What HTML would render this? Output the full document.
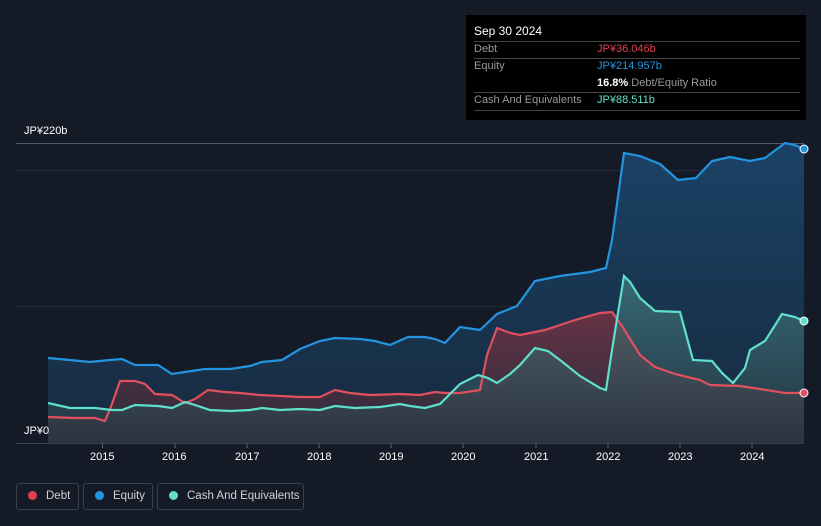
<!DOCTYPE html>
<html><head><meta charset="utf-8"><style>
html,body{margin:0;width:821px;height:526px;overflow:hidden}
body{background:#151b26;font-family:"Liberation Sans",sans-serif;position:relative}
.tt{position:absolute;left:466px;top:15px;width:340px;height:105px;background:#000;color:#fff;font-size:11px}
.tt .r{position:absolute;left:8px;width:326px;border-top:1px solid #444}
.lab{color:#999;position:absolute;left:8px}
.val{position:absolute;left:131px}
.leg{position:absolute;top:483px;height:27px;border:1px solid #3a404b;border-radius:3px;color:#cfd2d6;font-size:11.5px;line-height:25px;box-sizing:border-box;white-space:nowrap}
.leg i{display:inline-block;width:9px;height:9px;border-radius:50%;margin:0 9px 0 11px;vertical-align:-1px}
.yr{position:absolute;top:451px;color:#fff;font-size:11px}
</style></head><body>
<svg width="821" height="526" style="position:absolute;left:0;top:0">
<defs>
<linearGradient id="ge" x1="0" y1="0" x2="0" y2="1"><stop offset="0" stop-color="#1b4a72" stop-opacity=".85"/><stop offset="1" stop-color="#18314a" stop-opacity=".7"/></linearGradient>
<linearGradient id="gd" x1="0" y1="0" x2="0" y2="1"><stop offset="0" stop-color="#7a3242" stop-opacity=".8"/><stop offset="1" stop-color="#3a2d38" stop-opacity=".6"/></linearGradient>
<linearGradient id="gc" x1="0" y1="0" x2="0" y2="1"><stop offset="0" stop-color="#4a8a88" stop-opacity=".6"/><stop offset="1" stop-color="#2a3a45" stop-opacity=".6"/></linearGradient>
</defs>
<line x1="16" y1="143.5" x2="804" y2="143.5" stroke="#555b66"/>
<line x1="16" y1="170.5" x2="804" y2="170.5" stroke="#262c36"/>
<line x1="16" y1="306.5" x2="804" y2="306.5" stroke="#262c36"/>
<path fill="url(#ge)" d="M48,358 L70,360 L90,362 L110,360 L122,359 L135,365 L158,365 L172,374 L185,372 L205,369 L230,369 L250,366 L262,362 L282,360 L300,349 L320,341 L335,338 L360,339 L375,341 L390,345 L408,337 L425,337 L435,339 L445,343 L460,327 L480,330 L497,314 L517,306 L535,281 L560,276 L590,272 L606,268 L612,240 L624,153 L640,156 L660,164 L678,180 L696,178 L712,161 L730,157 L750,161 L765,158 L785,143 L795,145 L804,149 L804,443 L48,443Z"/>
<path fill="url(#gd)" d="M48,417 L75,418 L95,418 L105,421 L112,404 L120,381 L135,381 L145,384 L155,394 L172,395 L185,403 L195,399 L208,390 L225,392 L240,393 L260,395 L280,396 L300,397 L320,397 L335,390 L350,393 L370,395 L400,394 L420,395 L435,392 L445,393 L460,393 L480,390 L487,355 L497,328 L510,333 L520,335 L545,330 L575,320 L600,313 L612,312 L622,326 L640,355 L655,367 L675,374 L700,380 L710,385 L740,386 L760,389 L785,393 L804,393 L804,443 L48,443Z"/>
<path fill="url(#gc)" d="M48,403 L70,408 L95,408 L112,410 L122,410 L135,405 L158,406 L172,408 L185,402 L195,405 L210,410 L230,411 L250,410 L262,408 L280,410 L300,409 L320,410 L335,406 L355,408 L380,407 L400,404 L410,406 L425,408 L440,404 L460,384 L478,375 L488,378 L497,383 L510,374 L520,365 L535,348 L548,351 L560,360 L580,376 L600,388 L606,390 L612,350 L624,276 L630,282 L640,298 L655,311 L680,312 L693,360 L712,361 L722,373 L733,383 L745,368 L750,350 L765,341 L772,330 L782,314 L795,317 L804,321 L804,443 L48,443Z"/>
<path fill="none" stroke="#2394e0" stroke-width="2.2" d="M48,358 L70,360 L90,362 L110,360 L122,359 L135,365 L158,365 L172,374 L185,372 L205,369 L230,369 L250,366 L262,362 L282,360 L300,349 L320,341 L335,338 L360,339 L375,341 L390,345 L408,337 L425,337 L435,339 L445,343 L460,327 L480,330 L497,314 L517,306 L535,281 L560,276 L590,272 L606,268 L612,240 L624,153 L640,156 L660,164 L678,180 L696,178 L712,161 L730,157 L750,161 L765,158 L785,143 L795,145 L804,149"/>
<path fill="none" stroke="#e0505e" stroke-width="2.2" d="M48,417 L75,418 L95,418 L105,421 L112,404 L120,381 L135,381 L145,384 L155,394 L172,395 L185,403 L195,399 L208,390 L225,392 L240,393 L260,395 L280,396 L300,397 L320,397 L335,390 L350,393 L370,395 L400,394 L420,395 L435,392 L445,393 L460,393 L480,390 L487,355 L497,328 L510,333 L520,335 L545,330 L575,320 L600,313 L612,312 L622,326 L640,355 L655,367 L675,374 L700,380 L710,385 L740,386 L760,389 L785,393 L804,393"/>
<path fill="none" stroke="#5fe0cc" stroke-width="2.2" d="M48,403 L70,408 L95,408 L112,410 L122,410 L135,405 L158,406 L172,408 L185,402 L195,405 L210,410 L230,411 L250,410 L262,408 L280,410 L300,409 L320,410 L335,406 L355,408 L380,407 L400,404 L410,406 L425,408 L440,404 L460,384 L478,375 L488,378 L497,383 L510,374 L520,365 L535,348 L548,351 L560,360 L580,376 L600,388 L606,390 L612,350 L624,276 L630,282 L640,298 L655,311 L680,312 L693,360 L712,361 L722,373 L733,383 L745,368 L750,350 L765,341 L772,330 L782,314 L795,317 L804,321"/>
<circle cx="804" cy="149" r="4" fill="#2394e0" stroke="#fff" stroke-width="1"/>
<circle cx="804" cy="321" r="4" fill="#5fe0cc" stroke="#fff" stroke-width="1"/>
<circle cx="804" cy="393" r="4" fill="#e0505e" stroke="#fff" stroke-width="1"/>
<line x1="16" y1="443.5" x2="804" y2="443.5" stroke="#3a414c"/>
<g stroke="#5a616c"><line x1="102.5" y1="443" x2="102.5" y2="448"/><line x1="175" y1="443" x2="175" y2="448"/><line x1="247" y1="443" x2="247" y2="448"/><line x1="319" y1="443" x2="319" y2="448"/><line x1="391" y1="443" x2="391" y2="448"/><line x1="463" y1="443" x2="463" y2="448"/><line x1="536" y1="443" x2="536" y2="448"/><line x1="608" y1="443" x2="608" y2="448"/><line x1="680" y1="443" x2="680" y2="448"/><line x1="752" y1="443" x2="752" y2="448"/></g>
</svg>
<div style="position:absolute;left:24px;top:125px;color:#fff;font-size:11px">JP¥220b</div>
<div style="position:absolute;left:24px;top:425px;color:#fff;font-size:11px">JP¥0</div>
<div class="yr" style="left:90px">2015</div><div class="yr" style="left:162px">2016</div><div class="yr" style="left:235px">2017</div><div class="yr" style="left:307px">2018</div><div class="yr" style="left:379px">2019</div><div class="yr" style="left:451px">2020</div><div class="yr" style="left:524px">2021</div><div class="yr" style="left:596px">2022</div><div class="yr" style="left:668px">2023</div><div class="yr" style="left:740px">2024</div>
<div class="tt">
<div style="position:absolute;left:8px;top:9px;font-size:12px">Sep 30 2024</div>
<div class="r" style="top:26px"></div>
<div class="lab" style="top:28px">Debt</div><div class="val" style="top:28px;color:#e0404e">JP¥36.046b</div>
<div class="r" style="top:43px"></div>
<div class="lab" style="top:45px">Equity</div><div class="val" style="top:45px;color:#2394e0">JP¥214.957b</div>
<div class="val" style="top:62px"><b>16.8%</b> <span style="color:#999">Debt/Equity Ratio</span></div>
<div class="r" style="top:77px"></div>
<div class="lab" style="top:79px">Cash And Equivalents</div><div class="val" style="top:79px;color:#5fe0cc">JP¥88.511b</div>
<div class="r" style="top:95px"></div>
</div>
<div class="leg" style="left:16px;width:63px"><i style="background:#e0404e"></i>Debt</div>
<div class="leg" style="left:83px;width:70px"><i style="background:#2394e0"></i>Equity</div>
<div class="leg" style="left:157px;width:147px"><i style="background:#5fe0cc"></i>Cash And Equivalents</div>
</body></html>
